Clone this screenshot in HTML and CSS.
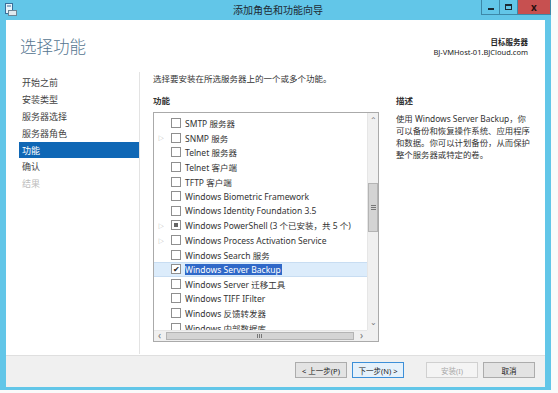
FILE: index.html
```html
<!DOCTYPE html>
<html lang="zh-CN">
<head>
    <meta charset="UTF-8">
    <title>添加角色和功能向导</title>
    <link rel="stylesheet" href="styles.css">
</head>
<body>
<div class="window">
    <div class="titlebar">
        <svg class="app-icon" width="12" height="13" viewBox="0 0 12 13">
            <rect x="0.5" y="0.5" width="7" height="10" fill="#e8f4fb" stroke="#3a6f9a"/>
            <rect x="2" y="2.5" width="4" height="1" fill="#3a6f9a"/>
            <rect x="3.5" y="7.5" width="8" height="5" fill="#dfe9ef" stroke="#6b8596"/>
        </svg>
        <div class="title">添加角色和功能向导</div>
        <div class="controls">
            <div class="ctl"><span class="min"></span></div>
            <div class="ctl"><span class="max"></span></div>
            <div class="ctl close">x</div>
        </div>
    </div>

    <div class="client">
        <div class="header">
            <h1>选择功能</h1>
            <div class="target">
                <div class="target-label">目标服务器</div>
                <div>BJ-VMHost-01.BJCloud.com</div>
            </div>
        </div>

        <div class="content">
            <ul class="steps">
                <li>开始之前</li>
                <li>安装类型</li>
                <li>服务器选择</li>
                <li>服务器角色</li>
                <li class="current">功能</li>
                <li>确认</li>
                <li class="disabled">结果</li>
            </ul>

            <div class="main">
                <p class="intro">选择要安装在所选服务器上的一个或多个功能。</p>
                <div class="label">功能</div>
                <div class="listbox">
                    <div class="rows">
                        <div class="row"><span class="exp"></span><span class="box"></span>SMTP 服务器</div>
                        <div class="row"><span class="exp">▷</span><span class="box"></span>SNMP 服务</div>
                        <div class="row"><span class="exp"></span><span class="box"></span>Telnet 服务器</div>
                        <div class="row"><span class="exp"></span><span class="box"></span>Telnet 客户端</div>
                        <div class="row"><span class="exp"></span><span class="box"></span>TFTP 客户端</div>
                        <div class="row"><span class="exp"></span><span class="box"></span>Windows Biometric Framework</div>
                        <div class="row"><span class="exp"></span><span class="box"></span>Windows Identity Foundation 3.5</div>
                        <div class="row"><span class="exp">▷</span><span class="box part"></span>Windows PowerShell (3 个已安装，共 5 个)</div>
                        <div class="row"><span class="exp">▷</span><span class="box"></span>Windows Process Activation Service</div>
                        <div class="row"><span class="exp"></span><span class="box"></span>Windows Search 服务</div>
                        <div class="row selected"><span class="exp"></span><span class="box checked">✔</span><span class="sel-text">Windows Server Backup</span></div>
                        <div class="row"><span class="exp"></span><span class="box"></span>Windows Server 迁移工具</div>
                        <div class="row"><span class="exp"></span><span class="box"></span>Windows TIFF IFilter</div>
                        <div class="row"><span class="exp"></span><span class="box"></span>Windows 反馈转发器</div>
                        <div class="row"><span class="exp"></span><span class="box"></span>Windows 内部数据库</div>
                    </div>
                    <div class="vscroll">
                        <div class="arrow">⌃</div>
                        <div class="vthumb"><span class="grip-h"></span></div>
                        <div class="arrow down">⌄</div>
                    </div>
                    <div class="hscroll">
                        <div class="harrow">‹</div>
                        <div class="hthumb"><span class="grip-v"></span></div>
                        <div class="harrow">›</div>
                    </div>
                    <div class="corner"></div>
                </div>
            </div>

            <div class="desc">
                <div class="label">描述</div>
                <p>使用 Windows Server Backup，你<br>可以备份和恢复操作系统、应用程序<br>和数据。你可以计划备份，从而保护<br>整个服务器或特定的卷。</p>
            </div>
        </div>

        <div class="footer">
            <button>&lt; 上一步(P)</button>
            <button class="default">下一步(N) &gt;</button>
            <button class="install" disabled>安装(I)</button>
            <button>取消</button>
        </div>
    </div>
</div>
</body>
</html>
```

FILE: styles.css
```css
body {
    margin: 0;
    background: #fafafa;
    font-family: "Noto Sans", "Noto Sans CJK SC", sans-serif;
    color: #333;
}
.window {
    box-sizing: border-box;
    width: 551px;
    height: 390px;
    background: #62c6e8; /* Win8 frame */
    padding: 0 6px 3px 6px;
    display: flex;
    flex-direction: column;
}
.titlebar {
    height: 20px;
    flex: none;
    display: flex;
    align-items: flex-start;
}
.app-icon {
    margin: 3px 0 0 -1px;
}
.title {
    flex: 1;
    text-align: center;
    font-size: 10px;
    line-height: 20px;
    color: #1e2a33;
    margin-left: 57px;
}
.controls {
    display: flex;
    margin-right: -6px;
}
.ctl {
    width: 17px;
    height: 14px;
    border: 1px solid #3d88a8;
    border-top: none;
    margin-left: -1px;
    display: flex;
    align-items: center;
    justify-content: center;
}
.ctl .min {
    width: 6px;
    height: 2px;
    background: #1c2a33;
    margin-top: 3px;
}
.ctl .max {
    width: 5px;
    height: 3px;
    border: 1px solid #1c2a33;
    border-top-width: 2px;
}
.ctl.close {
    width: 32px;
    background: #c75050;
    color: #2a1010;
    font-size: 10px;
    font-weight: bold;
    line-height: 12px;
}
.client {
    flex: 1;
    background: #fff;
    display: flex;
    flex-direction: column;
    min-height: 0;
}
.header {
    height: 52px;
    flex: none;
    display: flex;
    justify-content: space-between;
    align-items: flex-start;
}
.header h1 {
    margin: 14px 0 0 14px;
    font-size: 16.5px;
    font-weight: 300;
    color: #557590;
}
.target {
    margin: 17px 17px 0 0;
    text-align: right;
    font-size: 7.5px;
    line-height: 10px;
    color: #222;
}
.target-label {
    font-weight: bold;
}
.content {
    flex: 1;
    display: flex;
    min-height: 0;
}
.steps {
    list-style: none;
    margin: 0;
    padding: 2px 0 0 13px;
    width: 120px;
    border-right: 1px solid #e3e3e3;
    margin-bottom: 1px;
}
.steps li {
    height: 17px;
    line-height: 17px;
    font-size: 9px;
    padding-left: 3px;
    color: #444;
}
.steps li.current {
    background: #0f67b5;
    color: #fff;
    height: 16px;
}
.steps li.disabled {
    color: #bdbdbd;
}
.main {
    width: 226px;
    padding-left: 13px;
}
.intro {
    margin: 1px 0 0 0;
    font-size: 8.5px;
    line-height: 12px;
    color: #333;
}
.label {
    font-size: 8.5px;
    font-weight: bold;
    margin-top: 10px;
    line-height: 12px;
    color: #333;
}
.listbox {
    margin-top: 5px;
    height: 228px;
    border: 1px solid #aaa;
    display: grid;
    grid-template-columns: 1fr 11px;
    grid-template-rows: 1fr 11px;
    overflow: hidden;
}
.rows {
    overflow: hidden;
    padding-top: 3px;
}
.row {
    height: 14.6px;
    display: flex;
    align-items: center;
    font-size: 8.5px;
    color: #333;
    white-space: nowrap;
}
.exp {
    width: 17px;
    font-size: 6px;
    color: #999;
    padding-left: 4px;
    box-sizing: border-box;
}
.box {
    width: 8px;
    height: 8px;
    border: 1px solid #8f8f8f;
    background: #fff;
    margin-right: 4px;
    display: flex;
    align-items: center;
    justify-content: center;
    font-size: 8px;
    color: #222;
    line-height: 8px;
}
.box.part::after {
    content: "";
    width: 4px;
    height: 4px;
    background: #666;
}
.row.selected {
    background: #dcecfb;
    border-top: 1px solid #c8ddf2;
    border-bottom: 1px solid #c8ddf2;
    height: 12.6px;
}
.sel-text {
    background: #2f68c8;
    color: #fff;
    padding-right: 1px;
}
.vscroll {
    background: #f0f0f0;
    border-left: 1px solid #e6e6e6;
    display: flex;
    flex-direction: column;
}
.arrow {
    height: 11px;
    font-size: 8px;
    text-align: center;
    color: #777;
    line-height: 14px;
}
.arrow.down {
    margin-top: auto;
    line-height: 6px;
}
.vthumb {
    margin-top: 59px;
    height: 47px;
    background: #d4d4d4;
    border: 1px solid #b4b4b4;
    display: flex;
    align-items: center;
    justify-content: center;
}
.grip-h {
    width: 5px;
    height: 5px;
    background: repeating-linear-gradient(#777 0 1px, transparent 1px 2px);
}
.hscroll {
    background: #f0f0f0;
    border-top: 1px solid #e6e6e6;
    display: flex;
}
.harrow {
    width: 11px;
    text-align: center;
    font-size: 10px;
    line-height: 9px;
    color: #777;
}
.hthumb {
    flex: 1;
    margin: 1px 2px 1px 1px;
    background: #d4d4d4;
    border: 1px solid #b4b4b4;
    display: flex;
    align-items: center;
    justify-content: center;
}
.grip-v {
    width: 6px;
    height: 4px;
    background: repeating-linear-gradient(90deg, #777 0 1px, transparent 1px 2px);
}
.corner {
    background: #f0f0f0;
}
.desc {
    padding: 13px 0 0 17px;
    width: 145px;
}
.desc p {
    margin: 6px 0 0 0;
    font-size: 8.4px;
    line-height: 12px;
    color: #333;
    white-space: nowrap;
}
.footer {
    height: 32px;
    flex: none;
    background: #f0f0f0;
    border-top: 1px solid #dfdfdf;
    display: flex;
    justify-content: flex-end;
    align-items: flex-start;
    padding-right: 10px;
    box-sizing: border-box;
}
.footer button {
    margin-top: 6px;
    width: 52px;
    height: 16px;
    padding: 0;
    font-family: inherit;
    font-size: 7.5px;
    color: #222;
    background: #e3e3e3;
    border: 1px solid #acacac;
    margin-left: 5px;
}
.footer button.default {
    border-color: #3c8fd8;
    background: #e5f1fb;
}
.footer button.install {
    margin-left: 22px;
    background: #f4f4f4;
    border-color: #d0d0d0;
    color: #a8a8a8;
}
```
